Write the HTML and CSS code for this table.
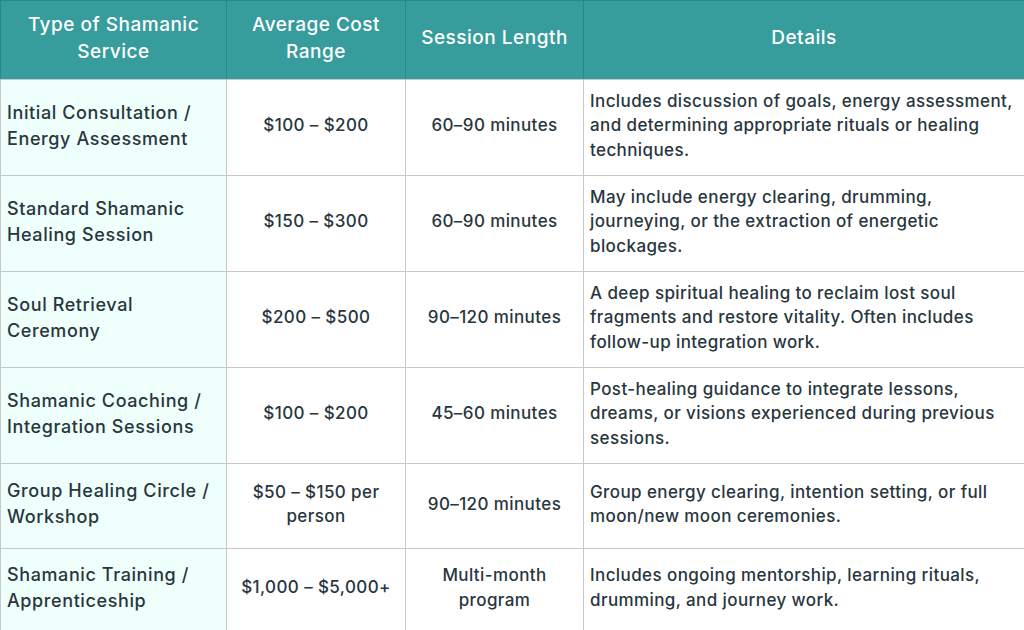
FILE: index.html
```html
<!DOCTYPE html>
<html lang="en">
<head>
<meta charset="utf-8">
<title>Shamanic Services Pricing</title>
<link rel="stylesheet" href="styles.css">
</head>
<body>
<table class="pricing">
  <colgroup>
    <col class="c-type">
    <col class="c-cost">
    <col class="c-len">
    <col class="c-det">
  </colgroup>
  <thead>
    <tr>
      <th>Type of Shamanic Service</th>
      <th>Average Cost Range</th>
      <th>Session Length</th>
      <th>Details</th>
    </tr>
  </thead>
  <tbody>
    <tr>
      <td class="type">Initial Consultation / Energy Assessment</td>
      <td class="mid">$100 – $200</td>
      <td class="mid">60–90 minutes</td>
      <td class="det">Includes discussion of goals, energy assessment, and determining appropriate rituals or healing techniques.</td>
    </tr>
    <tr>
      <td class="type">Standard Shamanic Healing Session</td>
      <td class="mid">$150 – $300</td>
      <td class="mid">60–90 minutes</td>
      <td class="det">May include energy clearing, drumming, journeying, or the extraction of energetic blockages.</td>
    </tr>
    <tr>
      <td class="type">Soul Retrieval Ceremony</td>
      <td class="mid">$200 – $500</td>
      <td class="mid">90–120 minutes</td>
      <td class="det">A deep spiritual healing to reclaim lost soul fragments and restore vitality. Often includes follow-up integration work.</td>
    </tr>
    <tr>
      <td class="type">Shamanic Coaching / Integration Sessions</td>
      <td class="mid">$100 – $200</td>
      <td class="mid">45–60 minutes</td>
      <td class="det">Post-healing guidance to integrate lessons, dreams, or visions experienced during previous sessions.</td>
    </tr>
    <tr class="short">
      <td class="type">Group Healing Circle / Workshop</td>
      <td class="mid">$50 – $150 per person</td>
      <td class="mid">90–120 minutes</td>
      <td class="det">Group energy clearing, intention setting, or full moon/new moon ceremonies.</td>
    </tr>
    <tr class="last">
      <td class="type">Shamanic Training / Apprenticeship</td>
      <td class="mid">$1,000 – $5,000+</td>
      <td class="mid">Multi-month program</td>
      <td class="det">Includes ongoing mentorship, learning rituals, drumming, and journey work.</td>
    </tr>
  </tbody>
</table>
</body>
</html>
```

FILE: styles.css
```css
html, body {
  margin: 0;
  padding: 0;
  background: #ffffff;
}

.pricing {
  width: 1024px;
  border-collapse: collapse;
  table-layout: fixed;
  font-family: "Inter", "Noto Sans", sans-serif;
  font-weight: 500;
  font-size: 17px;
  letter-spacing: 0.4px;
  color: #28363d;
}

.c-type { width: 226px; }
.c-cost { width: 179px; }
.c-len { width: 178px; }
.c-det { width: 441px; }

.pricing th {
  background: #379c9c;
  color: #ffffff;
  font-weight: 500;
  font-size: 19px;
  letter-spacing: 0.5px;
  line-height: 27px;
  height: 73px;
  padding: 0 8px 5px;
  text-align: center;
  vertical-align: middle;
  border: 1px solid #2a8787;
  border-bottom-color: #c8c8c8;
}

.pricing td {
  border: 1px solid #c8c8c8;
  line-height: 24.5px;
  height: 91px;
  padding: 0 6px 4px;
  vertical-align: middle;
}

.pricing tr.short td { height: 80px; }
.pricing tr.last td { height: 77px; }

.pricing td.type {
  background: #effffc;
  text-align: left;
  font-size: 18px;
  letter-spacing: 0.6px;
  line-height: 26px;
  padding-left: 6px;
  padding-right: 10px;
}

.pricing td.mid {
  text-align: center;
  padding-left: 12px;
  padding-right: 12px;
}

.pricing td.det {
  text-align: left;
}
```
